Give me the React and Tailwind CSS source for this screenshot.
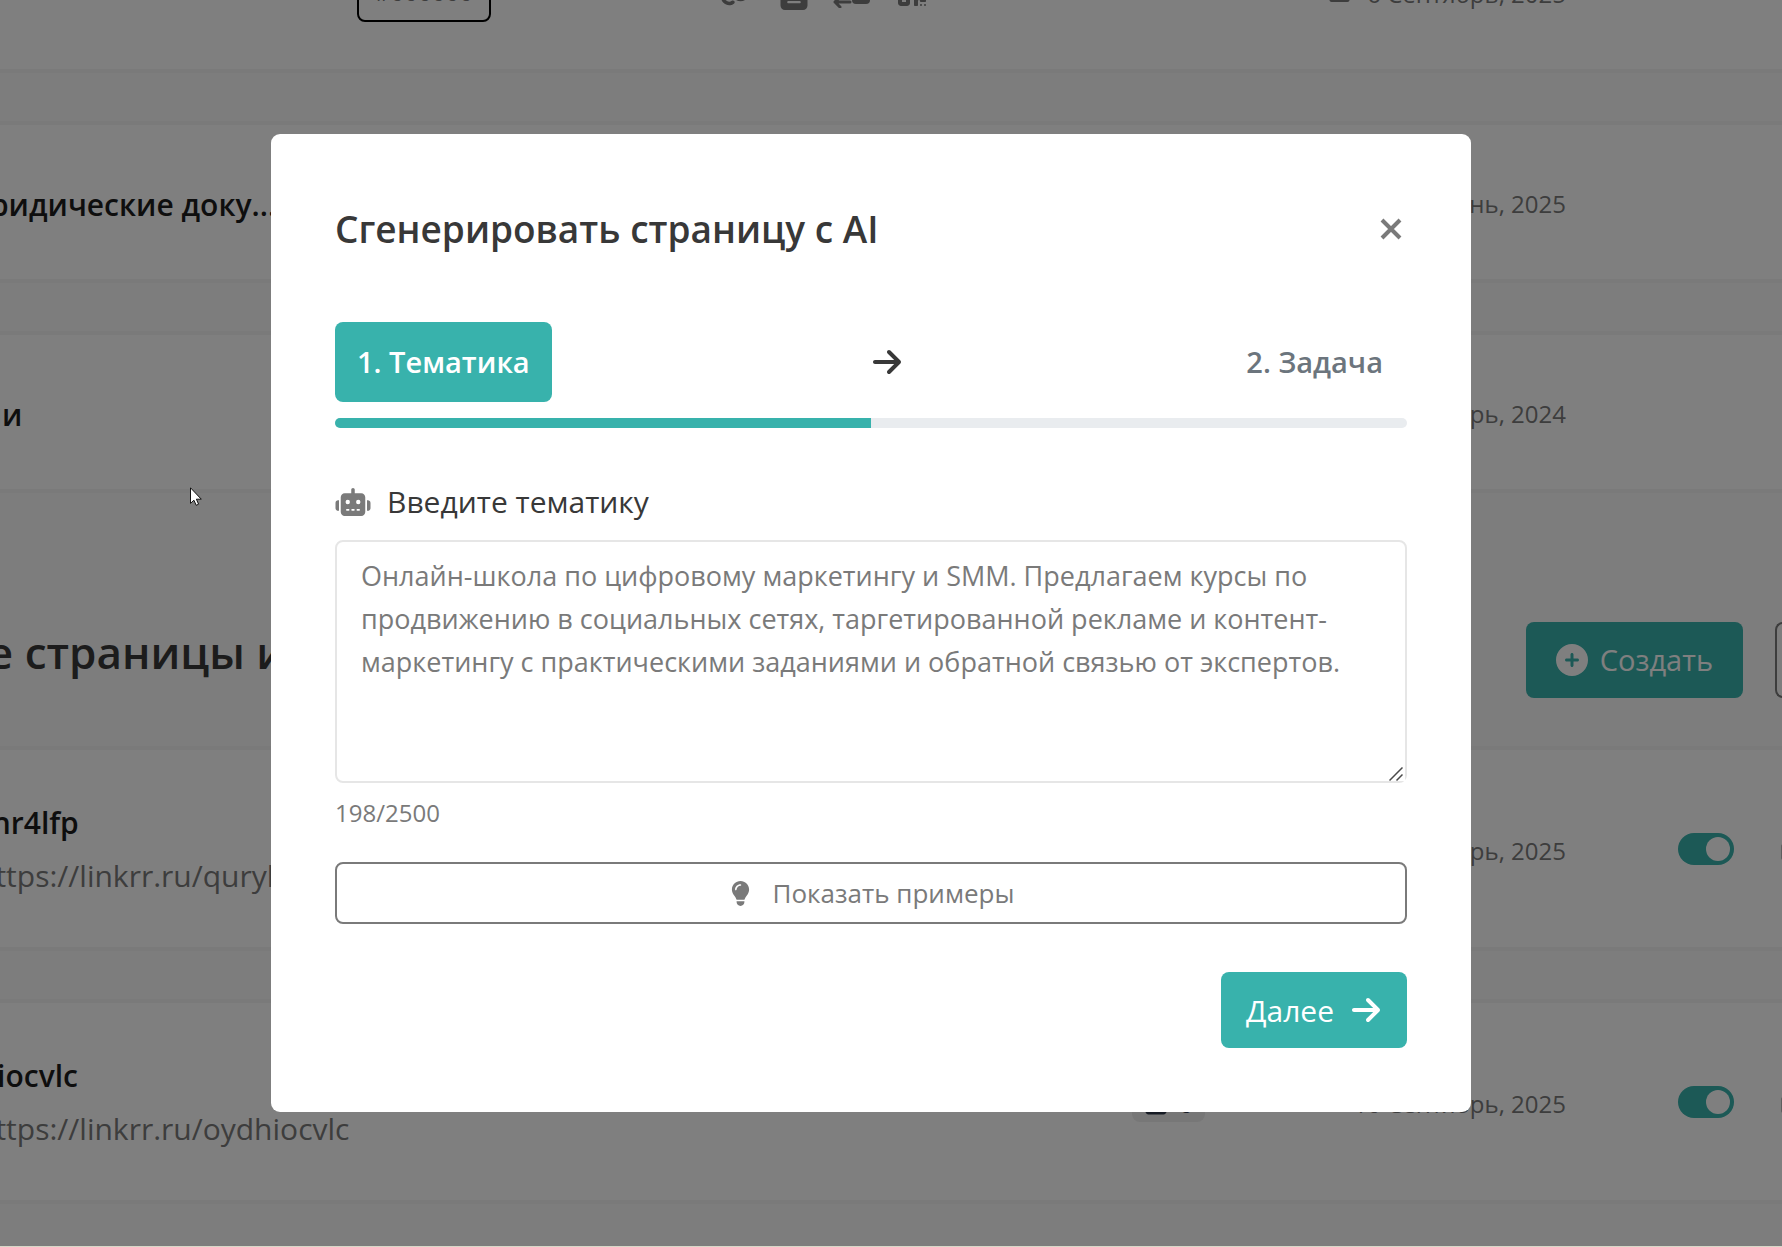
import { useState } from 'react';
import {
  FaArrowRight,
  FaCalendar,
  FaCirclePlus,
  FaFileLines,
  FaGlobe,
  FaLightbulb,
  FaLink,
  FaQrcode,
  FaRegCopy,
  FaRobot,
  FaSquarePollVertical,
} from 'react-icons/fa6';

const DEFAULT_TOPIC =
  'Онлайн-школа по цифровому маркетингу и SMM. Предлагаем курсы по продвижению в социальных сетях, таргетированной рекламе и контент-маркетингу с практическими заданиями и обратной связью от экспертов.';
const MAX_LENGTH = 2500;

function PaymentIcon() {
  return (
    <svg viewBox="0 0 40 32" className="h-8 w-10" fill="none" stroke="currentColor" aria-hidden="true">
      <rect x="20" y="6" width="18" height="22" rx="4" fill="currentColor" stroke="none" />
      <path d="M18 26H3M8 21l-5 5 5 5" strokeWidth="3" strokeLinecap="round" strokeLinejoin="round" />
    </svg>
  );
}

function CloseIcon() {
  return (
    <svg viewBox="0 0 22 22" className="h-[22px] w-[22px]" stroke="currentColor" strokeWidth="4" aria-hidden="true">
      <path d="M2 2l18 18M20 2L2 20" />
    </svg>
  );
}

function ResizeGrip() {
  return (
    <svg
      viewBox="0 0 14 14"
      className="pointer-events-none absolute bottom-0.5 right-1 size-3.5"
      stroke="#4a4a4a"
      strokeWidth="1.5"
      aria-hidden="true"
    >
      <path d="M.5 13.5l13-13M7.5 13.5l6-6" />
    </svg>
  );
}

function Cursor() {
  return (
    <svg viewBox="0 0 12 19" className="absolute left-[190px] top-[487px] h-[19px] w-3" aria-hidden="true">
      <path d="M.5.8v15.6l3.4-3.2 2.3 5.1 2.4-1.1-2.2-5h4.9z" fill="#fff" stroke="#111" strokeWidth="1" />
    </svg>
  );
}

function DateCell({ date }) {
  return (
    <div className="flex w-[249px] shrink-0 items-center justify-end gap-4 pt-1 text-2xl text-[#7a7a7a]">
      <FaCalendar size={23} className="mb-2" />
      <span className="whitespace-nowrap">{date}</span>
    </div>
  );
}

function Toggle({ label }) {
  return (
    <input
      type="checkbox"
      role="switch"
      aria-label={label}
      defaultChecked
      className="h-8 w-14 shrink-0 appearance-none rounded-full bg-gray-300 p-1 before:block before:size-6 before:rounded-full before:bg-white checked:bg-[#38b2ac] checked:before:ml-6"
    />
  );
}

function LinkCard({ name, date, children }) {
  return (
    <article className="flex h-[162px] items-center border-y-4 border-[#f4f4f4] bg-white">
      <h3 className="w-[432px] shrink-0 whitespace-nowrap pt-1 text-[30px] font-semibold text-[#1c1c1c]">{name}</h3>
      <div className="flex flex-1 items-center">{children}</div>
      <DateCell date={date} />
      <div className="w-[248px] shrink-0" />
    </article>
  );
}

function PageCard({ name, url, date, visits }) {
  return (
    <article className="flex h-[205px] items-center border-y-4 border-[#f4f4f4] bg-white">
      <div className="flex-1 text-[30px]">
        <h3 className="font-semibold leading-[53px] text-[#1c1c1c]">{name}</h3>
        <a href={url} className="flex items-center gap-5 leading-[53px] text-[#7a7a7a]">
          <FaGlobe size={32} />
          {url}
        </a>
      </div>
      <div className="mr-28 flex h-[41px] w-[73px] items-center justify-between rounded-lg bg-[#eeeeee] px-3 pt-1 text-2xl text-[#2d3748]">
        <FaSquarePollVertical size={24} />
        {visits}
      </div>
      <DateCell date={date} />
      <div className="ml-28 mr-[46px] flex">
        <Toggle label={name} />
      </div>
      <button type="button" aria-label="Копировать" className="w-[34px] text-[#7a7a7a]">
        <FaRegCopy size={24} />
      </button>
    </article>
  );
}

function Dashboard() {
  return (
    <main className="-ml-[75px] -mr-8 -mt-[89px]">
      <section className="flex flex-col gap-12">
        <LinkCard name="" date="6 Сентябрь, 2025">
          <span className="flex h-[60px] w-[134px] items-center justify-center rounded-lg border-2 border-black text-2xl text-[#7a7a7a]">
            #000000
          </span>
          <div className="ml-[229px] flex items-center gap-6 text-[#7a7a7a]">
            <FaLink size={36} />
            <FaFileLines className="h-9 w-7" />
            <PaymentIcon />
            <FaQrcode size={32} />
          </div>
        </LinkCard>
        <LinkCard name="4. Юридические доку..." date="18 Июнь, 2025" />
        <LinkCard name="Акции" date="12 Декабрь, 2024" />
      </section>

      <section>
        <div className="flex items-center pb-12 pt-[129px]">
          <h2 className="flex-1 pb-4 pl-3 text-[44px] font-semibold leading-[60px] text-[#383838]">
            Все страницы и сайты
          </h2>
          <button
            type="button"
            className="mr-8 flex h-[76px] items-center gap-3 rounded-lg bg-[#38b2ac] px-[30px] text-[29px] text-white"
          >
            <FaCirclePlus size={32} />
            Создать
          </button>
          <button
            type="button"
            aria-label="Фильтр"
            className="h-[76px] w-[39px] rounded-l-lg border-2 border-r-0 border-[#7a7a7a]"
          />
        </div>
        <div className="flex flex-col gap-12">
          <PageCard name="quryhr4lfp" url="https://linkrr.ru/quryhr4lfp" date="10 Сентябрь, 2025" visits={0} />
          <PageCard name="oydhiocvlc" url="https://linkrr.ru/oydhiocvlc" date="10 Сентябрь, 2025" visits={0} />
        </div>
      </section>
    </main>
  );
}

function GenerateModal() {
  const [topic, setTopic] = useState(DEFAULT_TOPIC);

  return (
    <div
      role="dialog"
      aria-modal="true"
      aria-labelledby="modal-title"
      className="w-[1200px] max-w-full rounded-[9px] bg-white p-16 text-[#383838]"
    >
      <div className="flex items-center justify-between pb-[62px]">
        <h1 id="modal-title" className="text-[37px] font-semibold leading-[62px]">
          Сгенерировать страницу с AI
        </h1>
        <button type="button" aria-label="Закрыть" className="mr-[5px] text-[#7a7a7a]">
          <CloseIcon />
        </button>
      </div>

      {/* Steps */}
      <div className="flex items-center justify-between text-[29px] font-semibold">
        <div className="flex h-20 items-center rounded-lg bg-[#38b2ac] px-[22px] text-white">1. Тематика</div>
        <FaArrowRight size={32} />
        <div className="flex h-20 items-center px-6 text-[#6c757d]">2. Задача</div>
      </div>
      <div className="mt-4 h-2.5 overflow-hidden rounded-full bg-[#e9ecef]">
        <div className="h-full w-1/2 bg-[#38b2ac]" />
      </div>

      <label htmlFor="topic" className="mt-[50px] flex items-center gap-4 text-[30px] leading-[48px]">
        <FaRobot className="h-7 w-9 text-[#7a7a7a]" />
        Введите тематику
      </label>
      <div className="relative mt-3.5">
        <textarea
          id="topic"
          value={topic}
          maxLength={MAX_LENGTH}
          onChange={(e) => setTopic(e.target.value)}
          className="block h-[243px] w-full rounded-lg border-2 border-[#e6e6e6] px-6 py-3 text-[27px] leading-[43px] text-[#7a7a7a] outline-none [&::-webkit-resizer]:bg-white"
        />
        <ResizeGrip />
      </div>
      <p className="mt-3 text-2xl leading-9 text-[#7a7a7a]">
        {topic.length}/{MAX_LENGTH}
      </p>

      <button
        type="button"
        className="mt-[31px] flex h-[62px] w-full items-center justify-center gap-5 rounded-lg border-2 border-[#7a7a7a] text-[26px] text-[#7a7a7a]"
      >
        <FaLightbulb size={25} />
        Показать примеры
      </button>

      <div className="mt-12 flex justify-end">
        <button
          type="button"
          className="flex h-[76px] items-center gap-4 rounded-lg bg-[#38b2ac] px-[25px] text-[30px] text-white"
        >
          Далее
          <FaArrowRight size={32} />
        </button>
      </div>
    </div>
  );
}

function App() {
  return (
    <div className="relative h-screen overflow-hidden border-b border-[#d8d8c8] bg-[#fafafa] font-['Open_Sans','Noto_Sans',sans-serif]">
      <Dashboard />
      <div className="absolute inset-0 flex items-center justify-center bg-black/50 pr-10">
        <GenerateModal />
      </div>
      <Cursor />
    </div>
  );
}

export default App;
